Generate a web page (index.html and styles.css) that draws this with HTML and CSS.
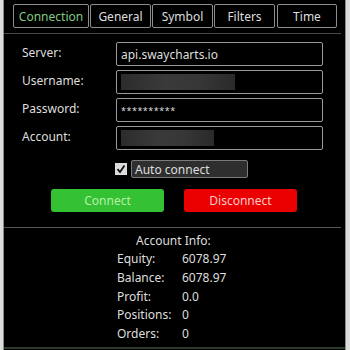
FILE: index.html
```html
<!DOCTYPE html>
<html lang="en">
<head>
    <meta charset="UTF-8">
    <title>Connection</title>
    <link rel="stylesheet" href="styles.css">
</head>
<body>
    <div class="panel">
        <div class="tabs">
            <div class="tab active w76">Connection</div>
            <div class="tab w61">General</div>
            <div class="tab w61">Symbol</div>
            <div class="tab w61">Filters</div>
            <div class="tab w60">Time</div>
        </div>
        <div class="sep"></div>

        <div class="form">
            <label>Server:</label>
            <div class="field">api.swaycharts.io</div>
            <label>Username:</label>
            <div class="field"><span class="blur user"></span></div>
            <label>Password:</label>
            <div class="field pass">**********</div>
            <label>Account:</label>
            <div class="field"><span class="blur acct"></span></div>
        </div>

        <div class="check-row">
            <span class="checkbox">
                <svg width="10" height="10" viewBox="0 0 10 10"><path d="M1.5 5.2 L4 8 L8.5 1.5" fill="none" stroke="#111" stroke-width="1.8"/></svg>
            </span>
            <span class="check-label">Auto connect</span>
        </div>

        <div class="buttons">
            <div class="button connect">Connect</div>
            <div class="button disconnect">Disconnect</div>
        </div>

        <div class="sep lower"></div>

        <div class="info">
            <div class="info-title">Account Info:</div>
            <div class="info-grid">
                <span>Equity:</span><span>6078.97</span>
                <span>Balance:</span><span>6078.97</span>
                <span>Profit:</span><span>0.0</span>
                <span>Positions:</span><span>0</span>
                <span>Orders:</span><span>0</span>
            </div>
        </div>
        <div class="bottom-line"></div>
    </div>
</body>
</html>
```

FILE: styles.css
```css
body {
    margin: 0;
    background-color: #dcdcdc;
    font-family: "Noto Sans", "DejaVu Sans", sans-serif;
    font-size: 12px;
    color: #dedede;
}
.panel {
    margin-left: 3px;
    width: 341px;
    height: 350px;
    background: #000;
    border-left: 1px solid #8a8a8a;
    border-right: 1px solid #8a8a8a;
    display: flex;
    flex-direction: column;
}
.tabs {
    display: flex;
    gap: 1px;
    padding: 4px 0 0 9px;
}
.tab {
    height: 24px;
    border: 1px solid #8c8c8c;
    border-radius: 2px;
    box-sizing: border-box;
    display: flex;
    align-items: center;
    justify-content: center;
}
.tab.active {
    color: #80c880;
}
.w76 { width: 76px; }
.w61 { width: 61px; }
.w60 { width: 60px; margin-left: 1px; }
.sep {
    margin: 5px 4px 0 0;
    border-top: 1px solid #4a4a4a;
}
.form {
    display: grid;
    grid-template-columns: 94px 207px;
    row-gap: 4px;
    padding: 8px 0 0 18px;
    align-items: center;
}
.form label {
    padding-bottom: 3px;
}
.field {
    height: 24px;
    box-sizing: border-box;
    border: 1px solid #9a9a9a;
    border-radius: 2px;
    padding-left: 4px;
    display: flex;
    align-items: center;
}
.field.pass {
    font-size: 9px;
    letter-spacing: 0.5px;
}
.blur {
    height: 16px;
    display: block;
    background: linear-gradient(90deg, #2c2c2c, #3a3a3a 40%, #363636 70%, #2a2a2a);
}
.blur.user { width: 114px; }
.blur.acct { width: 93px; }
.check-row {
    display: flex;
    align-items: center;
    padding: 10px 0 0 111px;
}
.checkbox {
    width: 12px;
    height: 12px;
    background: #dcdcdc;
    display: flex;
    align-items: center;
    justify-content: center;
    margin-right: 4px;
}
.check-label {
    width: 117px;
    height: 18px;
    box-sizing: border-box;
    border: 1px solid #7a7a7a;
    border-radius: 2px;
    background: #2e2e2e;
    padding-left: 3px;
    display: flex;
    align-items: center;
}
.buttons {
    display: flex;
    gap: 20px;
    padding: 11px 0 0 47px;
}
.button {
    width: 113px;
    height: 23px;
    border-radius: 3px;
    display: flex;
    align-items: center;
    justify-content: center;
}
.connect {
    background: #34c234;
    color: #b6efa6;
}
.disconnect {
    background: #ea0000;
    color: #ffc8c8;
}
.sep.lower {
    margin-top: 15px;
    border-top-color: #555;
}
.info {
    padding-top: 4px;
}
.info-title {
    padding-left: 132px;
    line-height: 18px;
}
.info-grid {
    display: grid;
    grid-template-columns: 65px auto;
    padding-left: 113px;
    line-height: 18.8px;
}
.bottom-line {
    margin-top: auto;
    margin-bottom: 1px;
    height: 2px;
    background: #2c3a2c;
}
```
